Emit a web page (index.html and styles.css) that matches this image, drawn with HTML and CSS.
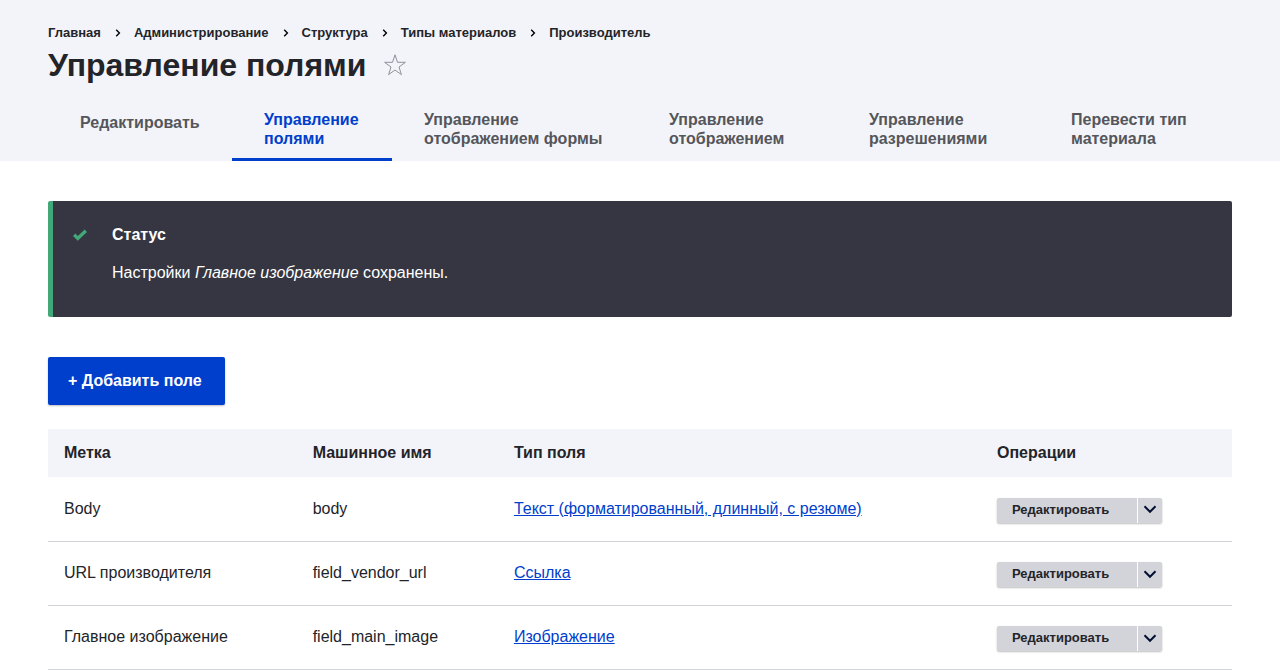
FILE: index.html
```html
<!DOCTYPE html>
<html lang="ru">
<head>
<meta charset="utf-8">
<meta name="viewport" content="width=device-width, initial-scale=1">
<title>Управление полями</title>
<link rel="stylesheet" href="styles.css">
</head>
<body>
<header class="page-header">
  <nav aria-label="Строка навигации">
    <ol class="breadcrumb">
      <li class="breadcrumb-item"><a class="breadcrumb-link" href="#">Главная</a></li>
      <li class="breadcrumb-item"><svg class="breadcrumb-arrow" viewBox="0 0 6 8" aria-hidden="true"><path d="M1.2 0.8 4.4 4 1.2 7.2"/></svg><a class="breadcrumb-link" href="#">Администрирование</a></li>
      <li class="breadcrumb-item"><svg class="breadcrumb-arrow" viewBox="0 0 6 8" aria-hidden="true"><path d="M1.2 0.8 4.4 4 1.2 7.2"/></svg><a class="breadcrumb-link" href="#">Структура</a></li>
      <li class="breadcrumb-item"><svg class="breadcrumb-arrow" viewBox="0 0 6 8" aria-hidden="true"><path d="M1.2 0.8 4.4 4 1.2 7.2"/></svg><a class="breadcrumb-link" href="#">Типы материалов</a></li>
      <li class="breadcrumb-item"><svg class="breadcrumb-arrow" viewBox="0 0 6 8" aria-hidden="true"><path d="M1.2 0.8 4.4 4 1.2 7.2"/></svg><a class="breadcrumb-link" href="#">Производитель</a></li>
    </ol>
  </nav>
  <div class="title-row">
    <h1 class="page-title">Управление полями</h1>
    <button class="shortcut" type="button" aria-label="Добавить в ярлыки">
      <svg class="shortcut-star" viewBox="0 0 24 24" aria-hidden="true"><path d="M12 1.8 14.5 9.3H22.4L16 14 18.4 21.6 12 17 5.6 21.6 8 14 1.6 9.3H9.5Z"/></svg>
    </button>
  </div>
  <nav aria-label="Главные вкладки">
    <ul class="tabs">
      <li class="tab"><a class="tab-link" href="#">Редактировать</a></li>
      <li class="tab tab-active"><a class="tab-link" href="#" aria-current="page">Управление полями</a></li>
      <li class="tab"><a class="tab-link" href="#">Управление отображением формы</a></li>
      <li class="tab"><a class="tab-link" href="#">Управление отображением</a></li>
      <li class="tab"><a class="tab-link" href="#">Управление разрешениями</a></li>
      <li class="tab"><a class="tab-link" href="#">Перевести тип материала</a></li>
    </ul>
  </nav>
</header>
<main class="content">
  <section class="message" role="status" aria-labelledby="message-title">
    <svg class="message-icon" viewBox="0 0 16 16" aria-hidden="true"><path d="M2.2 7.8 5.8 11.4 13.8 3.8"/></svg>
    <div>
      <h2 class="message-title" id="message-title">Статус</h2>
      <p class="message-text">Настройки <em>Главное изображение</em> сохранены.</p>
    </div>
  </section>
  <a class="button-primary" href="#">+ Добавить поле</a>
  <table class="fields">
    <colgroup><col class="col-label"><col class="col-name"><col class="col-type"><col></colgroup>
    <thead>
      <tr><th scope="col">Метка</th><th scope="col">Машинное имя</th><th scope="col">Тип поля</th><th scope="col">Операции</th></tr>
    </thead>
    <tbody>
      <tr>
        <td>Body</td><td>body</td>
        <td><a class="link" href="#">Текст (форматированный, длинный, с резюме)</a></td>
        <td><div class="dropbutton"><a class="dropbutton-action" href="#">Редактировать</a><button class="dropbutton-toggle" type="button" aria-label="Список дополнительных действий"><svg class="dropbutton-arrow" viewBox="0 0 14 9" aria-hidden="true"><path d="M1.5 1.3 7 6.8 12.5 1.3"/></svg></button></div></td>
      </tr>
      <tr>
        <td>URL производителя</td><td>field_vendor_url</td>
        <td><a class="link" href="#">Ссылка</a></td>
        <td><div class="dropbutton"><a class="dropbutton-action" href="#">Редактировать</a><button class="dropbutton-toggle" type="button" aria-label="Список дополнительных действий"><svg class="dropbutton-arrow" viewBox="0 0 14 9" aria-hidden="true"><path d="M1.5 1.3 7 6.8 12.5 1.3"/></svg></button></div></td>
      </tr>
      <tr>
        <td>Главное изображение</td><td>field_main_image</td>
        <td><a class="link" href="#">Изображение</a></td>
        <td><div class="dropbutton"><a class="dropbutton-action" href="#">Редактировать</a><button class="dropbutton-toggle" type="button" aria-label="Список дополнительных действий"><svg class="dropbutton-arrow" viewBox="0 0 14 9" aria-hidden="true"><path d="M1.5 1.3 7 6.8 12.5 1.3"/></svg></button></div></td>
      </tr>
    </tbody>
  </table>
</main>
</body>
</html>
```
FILE: styles.css
```css
* {
  box-sizing: border-box;
}

body {
  margin: 0;
  background: #fff;
  color: #232429;
  font: 16px/24px "Liberation Sans", Arial, sans-serif;
}

a {
  color: inherit;
  text-decoration: none;
}

.page-header {
  padding: 24px 48px 0;
  background: #f3f4f9;
}

.breadcrumb {
  display: flex;
  flex-wrap: wrap;
  gap: 14px;
  margin: 0;
  padding: 0;
  list-style: none;
  font-size: 13px;
  font-weight: 700;
  line-height: 18px;
}

.breadcrumb-item {
  display: flex;
  align-items: center;
  gap: 13px;
}

.breadcrumb-arrow {
  width: 6px;
  height: 8px;
  fill: none;
  stroke: #000;
  stroke-width: 1.4;
}

.title-row {
  display: flex;
  align-items: center;
  gap: 17px;
  margin-bottom: 12px;
}

.page-title {
  margin: 0;
  font-size: 32px;
  line-height: 46px;
}

.shortcut {
  display: flex;
  padding: 0;
  border: 0;
  background: none;
}

.shortcut-star {
  width: 24px;
  height: 24px;
  fill: none;
  stroke: #8e929c;
}

.tabs {
  display: grid;
  grid-template-columns: 184fr 160fr 245fr 200fr 202fr 193fr;
  margin: 0;
  padding: 0;
  list-style: none;
  color: #55565b;
  font-weight: 700;
  line-height: 19px;
}

.tab {
  border-bottom: 3px solid transparent;
}

.tab-active {
  border-color: #003ecc;
  color: #003ecc;
}

.tab-link {
  display: flex;
  align-items: center;
  min-height: 45px;
  padding: 10px 32px;
}

.content {
  padding: 40px 48px 0;
}

.message {
  display: flex;
  gap: 24px;
  margin-bottom: 40px;
  padding: 22px 20px 32px 19px;
  border-left: 5px solid #42a877;
  border-radius: 2px;
  background: #353641;
  color: #fff;
}

.message-icon {
  flex: none;
  width: 16px;
  height: 24px;
  fill: none;
  stroke: #42a877;
  stroke-width: 3.4;
}

.message-title {
  margin: 0 0 14px;
  font-size: 16px;
}

.message-text {
  margin: 0;
}

.button-primary {
  display: inline-block;
  margin-bottom: 24px;
  padding: 12px 23px 12px 20px;
  border-radius: 2px;
  background: #003ecc;
  box-shadow: 0 1px 2px rgba(0, 0, 0, 0.25);
  color: #fff;
  font-weight: 700;
  vertical-align: top;
}

.fields {
  width: 100%;
  border-collapse: collapse;
  table-layout: fixed;
}

.col-label {
  width: 21%;
}

.col-name {
  width: 17%;
}

.col-type {
  width: 40.8%;
}

.fields th {
  height: 48px;
  padding: 0 16px;
  background: #f3f4f9;
  text-align: left;
}

.fields td {
  height: 64px;
  padding: 0 16px;
  border-bottom: 1px solid #d3d4d9;
}

.link {
  color: #003ecc;
  text-decoration: underline;
}

.dropbutton {
  display: flex;
  width: max-content;
  margin-top: 3px;
  border-radius: 2px;
  background: #d3d4d9;
  box-shadow: 0 1px 2px rgba(0, 0, 0, 0.25);
  font-size: 13px;
  font-weight: 700;
  line-height: 24px;
}

.dropbutton-action {
  padding: 0 28px 1px 15px;
}

.dropbutton-toggle {
  display: flex;
  align-items: center;
  justify-content: center;
  width: 25px;
  padding: 0 0 1px;
  border: 0;
  border-left: 1px solid #fff;
  background: none;
}

.dropbutton-arrow {
  width: 14px;
  height: 9px;
  fill: none;
  stroke: #000f33;
  stroke-width: 2;
}
```
